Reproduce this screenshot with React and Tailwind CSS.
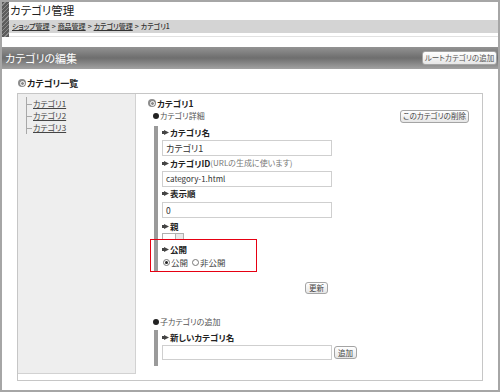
import React from "react";

const Arrow = () => (
  <svg width="7" height="5" viewBox="0 0 7 5" className="mr-[1px] shrink-0">
    <rect x="0" y="1" width="2" height="3" fill="#444" />
    <path d="M2 0 L7 2.5 L2 5 Z" fill="#444" />
  </svg>
);

const Ring = () => (
  <span className="w-[8px] h-[8px] rounded-full bg-[#8c8c8c] flex items-center justify-center shrink-0 mr-[1px]">
    <span className="w-[5px] h-[5px] rounded-full border border-white bg-[#8c8c8c]" />
  </span>
);

const Dot = () => (
  <span className="w-[6px] h-[6px] rounded-full bg-[#222] shrink-0 mr-[1px]" />
);

const Btn = ({ children, className = "" }) => (
  <button
    className={`flex items-center justify-center whitespace-nowrap border border-[#a4a4a4] rounded-[3px] bg-gradient-to-b from-white to-[#e6e6e6] text-[#444] text-[7.5px] leading-none ${className}`}
  >
    {children}
  </button>
);

const Label = ({ children, className = "" }) => (
  <div className={`flex items-center text-[8.5px] font-bold text-[#222] leading-none ${className}`}>
    <Arrow />
    {children}
  </div>
);

const Field = ({ value, className = "" }) => (
  <div
    className={`w-[170px] border border-[#cfcfcf] bg-white flex items-center pl-[3px] text-[#333] leading-none ${className}`}
  >
    {value}
  </div>
);

const tree = ["カテゴリ1", "カテゴリ2", "カテゴリ3"];

export default function App() {
  return (
    <div className="relative w-[500px] h-[392px] border-2 border-[#a6a6a6] bg-white overflow-hidden font-['Noto_Sans_CJK_JP',sans-serif] [font-feature-settings:'palt']">
      {/* page title */}
      <div className="flex">
        <div className="w-[7px] h-[35px] bg-[repeating-linear-gradient(135deg,#5c5c5c_0px,#5c5c5c_2px,#8e8e8e_2px,#8e8e8e_3px)]" />
        <div className="flex-1">
          <div className="h-[18px] flex items-center pl-[1px] text-[11.5px] text-[#222] leading-none">
            カテゴリ管理
          </div>
          <div className="h-[13px] bg-[#d4d4d4] flex items-center pl-[3px] text-[7px] font-medium text-[#333] leading-none gap-[2px]">
            <span className="underline">ショップ管理</span>
            <span>&gt;</span>
            <span className="underline">商品管理</span>
            <span>&gt;</span>
            <span className="underline">カテゴリ管理</span>
            <span>&gt;</span>
            <span>カテゴリ1</span>
          </div>
          <div className="h-[4px] border-b border-[#e2e2e2]" />
        </div>
      </div>

      {/* section header */}
      <div className="mt-[10px] h-[22px] bg-gradient-to-b from-[#939393] via-[#6e6e6e] to-[#a2a2a2] flex items-center justify-between pl-[3px] pr-[1px]">
        <span className="text-[11px] text-white leading-none">カテゴリの編集</span>
        <Btn className="w-[75px] h-[14px] text-[#555]">ルートカテゴリの追加</Btn>
      </div>

      <div className="mt-[7px] ml-[16px] h-[14px] flex items-center text-[9px] font-bold text-[#222] leading-none">
        <Ring />
        カテゴリ一覧
      </div>

      {/* main box */}
      <div className="mt-[3px] ml-[15px] w-[466px] h-[288px] border border-[#c6c6c6] flex">
        <div className="w-[118px] h-[280px] bg-[#eeeeee] border-r border-b border-[#d2d2d2] pt-[3px]">
          <div className="ml-[8px] border-l border-[#a8a8a8] flex flex-col pt-[1px] w-fit">
            {tree.map((t) => (
              <div key={t} className="h-[12px] shrink-0 flex items-center">
                <span className="w-[5px] h-px bg-[#a8a8a8] mr-[1px]" />
                <span className="text-[8px] text-[#444] underline leading-none">{t}</span>
              </div>
            ))}
          </div>
        </div>

        <div className="flex-1 pl-[12px] pt-[3px]">
          <div className="h-[12px] flex items-center text-[8.5px] font-bold text-[#222] leading-none">
            <Ring />
            カテゴリ1
          </div>
          <div className="h-[14px] flex items-center justify-between pl-[5px] pr-[13px]">
            <div className="flex items-center text-[8px] text-[#555] leading-none">
              <Dot />
              カテゴリ詳細
            </div>
            <Btn className="w-[69px] h-[13px]">このカテゴリの削除</Btn>
          </div>

          <div className="mt-[3px] ml-[6px] border-l-4 border-[#9a9a9a] pl-[4px] pb-[2px]">
            <Label className="h-[12px]">カテゴリ名</Label>
            <Field value="カテゴリ1" className="mt-[2px] h-[16px] text-[9px]" />
            <Label className="h-[14px]">
              カテゴリID
              <span className="font-normal text-[#777] text-[8px]">(URLの生成に使います)</span>
            </Label>
            <Field value="category-1.html" className="mt-[1px] h-[16px] text-[8px]" />
            <Label className="h-[13px]">表示順</Label>
            <Field value="0" className="mt-[2px] h-[16px] text-[8.5px]" />
            <Label className="mt-[1px] h-[14px]">親</Label>
            <div className="h-[7px] w-[22px] flex border-t border-x border-[#b0b0b0]">
              <div className="flex-1" />
              <div className="w-[8px] border-l border-[#b0b0b0] bg-[#e8e8e8]" />
            </div>
            <Label className="mt-[2px] h-[14px]">公開</Label>
            <div className="h-[13px] flex items-center text-[8.5px] text-[#444] leading-none pl-[1px]">
              <span className="w-[7px] h-[7px] rounded-full border border-[#777] flex items-center justify-center mr-[1px]">
                <span className="w-[3px] h-[3px] rounded-full bg-[#222]" />
              </span>
              公開
              <span className="w-[7px] h-[7px] rounded-full border border-[#777] ml-[4px] mr-[1px]" />
              非公開
            </div>
          </div>

          <div className="mt-[11px] flex justify-center">
            <Btn className="w-[23px] h-[12px] ml-[3px]">更新</Btn>
          </div>

          <div className="mt-[22px] h-[12px] pl-[5px] flex items-center text-[8px] text-[#555] leading-none">
            <Dot />
            子カテゴリの追加
          </div>
          <div className="mt-[2px] ml-[6px] border-l-4 border-[#9a9a9a] pl-[4px] pb-[6px]">
            <Label className="h-[14px]">新しいカテゴリ名</Label>
            <div className="mt-[1px] flex items-center">
              <Field value="" className="h-[15px]" />
              <Btn className="ml-[2px] w-[23px] h-[13px]">追加</Btn>
            </div>
          </div>
        </div>
      </div>

      {/* annotation */}
      <div className="absolute left-[148px] top-[237px] w-[107px] h-[33px] border border-[#e60012]" />
    </div>
  );
}
